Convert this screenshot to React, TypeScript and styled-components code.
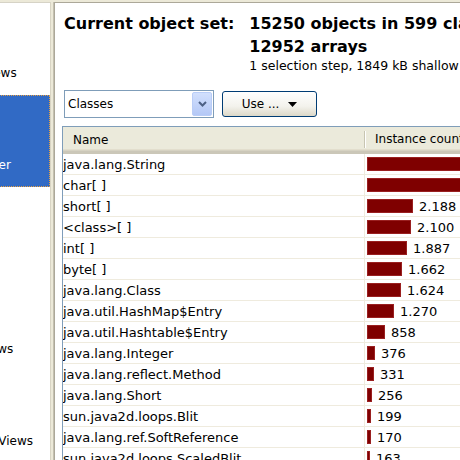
import React from 'react'
import styled, { createGlobalStyle } from 'styled-components'

const GlobalStyle = createGlobalStyle`
  html, body {
    margin: 0;
    padding: 0;
    background: #ece9d8;
  }
  body {
    font-family: "DejaVu Sans", Verdana, sans-serif;
    overflow: hidden;
  }
`

const Frame = styled.div`
  display: flex;
  height: 460px;
  padding-top: 2px;
  box-sizing: border-box;
  overflow: hidden;
`

const Sidebar = styled.div`
  width: 50px;
  flex: none;
  background: #fff;
  border-top: 1px solid #d6d3c6;
  overflow: hidden;
`

const TileColumn = styled.div`
  width: 154px;
  margin-left: -104px;
  display: flex;
  flex-direction: column;
`

const Tile = styled.div<{ $selected?: boolean }>`
  height: 92px;
  flex: none;
  box-sizing: border-box;
  display: flex;
  align-items: flex-end;
  justify-content: center;
  padding-bottom: 15px;
  font-size: 12px;
  white-space: nowrap;
  color: ${p => (p.$selected ? '#fff' : '#000')};
  background: ${p => (p.$selected ? '#316ac5' : 'transparent')};
  outline: ${p => (p.$selected ? '1px dotted #e8a040' : 'none')};
  outline-offset: -1px;
`

const Splitter = styled.div`
  width: 4px;
  flex: none;
  box-sizing: border-box;
  background: #ece9d8;
  border-left: 1px solid #d8d4c4;
  border-right: 1px solid #c4c0b0;
`

const Main = styled.div`
  flex: 1;
  min-width: 0;
  background: #fff;
  border-top: 1px solid #aca899;
  border-left: 1px solid #aca899;
  padding-left: 7px;
  overflow: hidden;
`

const Summary = styled.div`
  display: grid;
  grid-template-columns: auto 1fr;
  column-gap: 15px;
  padding: 9px 0 0 2px;
  white-space: nowrap;
`

const Label = styled.div`
  font-weight: bold;
  font-size: 16px;
  line-height: 23px;
`

const Values = styled.div`
  min-width: 0;
`

const Value = styled.div`
  font-weight: bold;
  font-size: 16px;
  line-height: 23px;
`

const Note = styled.div`
  font-size: 12.5px;
  line-height: 16px;
`

const Controls = styled.div`
  display: flex;
  align-items: center;
  gap: 8px;
  padding: 16px 0 0 2px;
  height: 28px;
  box-sizing: content-box;
`

const Combo = styled.div`
  width: 150px;
  height: 28px;
  box-sizing: border-box;
  border: 1px solid #7f9db9;
  display: flex;
  align-items: center;
  justify-content: space-between;
  padding: 1px 1px 1px 3px;
  font-size: 12px;
`

const ComboArrow = styled.div`
  width: 20px;
  height: 100%;
  box-sizing: border-box;
  border: 1px solid #b9cdf7;
  border-radius: 2px;
  background: linear-gradient(#d2e0fd, #b4c8f6);
  display: flex;
  align-items: center;
  justify-content: center;
`

const MenuButton = styled.button`
  width: 95px;
  height: 26px;
  border: 1px solid #003c74;
  border-radius: 3px;
  background: linear-gradient(#ffffff, #f3f2ec 60%, #dcd8c8);
  font-family: "DejaVu Sans", Verdana, sans-serif;
  font-size: 12px;
  color: #000;
  display: flex;
  align-items: center;
  justify-content: center;
  gap: 9px;
  padding: 0;
`

const Table = styled.div`
  margin-top: 8px;
  width: 520px;
  border-top: 1px solid #7f9db9;
  border-left: 1px solid #7f9db9;
`

const HeaderRow = styled.div`
  display: grid;
  grid-template-columns: 302px 1fr;
  height: 27px;
  box-sizing: border-box;
  background: #ebeadb;
  border-bottom: 3px solid #cbc7b8;
  box-shadow: inset 0 -1px 0 #d6d2c2, inset 0 -2px 0 #e2decd;
  font-size: 12px;
`

const HeaderCell = styled.div<{ $divider?: boolean }>`
  display: flex;
  align-items: center;
  padding-left: 10px;
  border-right: ${p => (p.$divider ? '1px solid #c7c5b2' : 'none')};
  box-shadow: ${p => (p.$divider ? '1px 0 0 #fff' : 'none')};
  margin: ${p => (p.$divider ? '4px 0 3px' : '0')};
`

const Row = styled.div`
  display: grid;
  grid-template-columns: 302px 1fr;
  height: 21px;
  box-sizing: border-box;
  border-bottom: 1px solid #efebde;
  font-size: 13px;
`

const NameCell = styled.div`
  display: flex;
  align-items: center;
  border-right: 1px solid #efebde;
  white-space: nowrap;
  overflow: hidden;
`

const CountCell = styled.div`
  display: flex;
  align-items: center;
  gap: 6px;
  padding-left: 2px;
  white-space: nowrap;
`

const Bar = styled.div`
  height: 14px;
  flex: none;
  box-sizing: border-box;
  background: #7f0000;
  border: 1px solid #9a2020;
`

const rows: [string, number][] = [
  ['java.lang.String', 4795],
  ['char[ ]', 4511],
  ['short[ ]', 2188],
  ['<class>[ ]', 2100],
  ['int[ ]', 1887],
  ['byte[ ]', 1662],
  ['java.lang.Class', 1624],
  ['java.util.HashMap$Entry', 1270],
  ['java.util.Hashtable$Entry', 858],
  ['java.lang.Integer', 376],
  ['java.lang.reflect.Method', 331],
  ['java.lang.Short', 256],
  ['sun.java2d.loops.Blit', 199],
  ['java.lang.ref.SoftReference', 170],
  ['sun.java2d.loops.ScaledBlit', 163],
]

const tiles = ['Memory Views', 'Heap Walker', 'Threads', 'Thread Views', 'VM Telemetry Views']

const fmt = (n: number) => (n >= 1000 ? `${Math.floor(n / 1000)}.${String(n % 1000).padStart(3, '0')}` : String(n))

export default function App() {
  return (
    <>
      <GlobalStyle />
      <Frame>
        <Sidebar>
          <TileColumn>
            {tiles.map((t, i) => (
              <Tile key={t} $selected={i === 1}>{t}</Tile>
            ))}
          </TileColumn>
        </Sidebar>
        <Splitter />
        <Main>
          <Summary>
            <Label>Current object set:</Label>
            <Values>
              <Value>15250 objects in 599 classes, 2298 instances,</Value>
              <Value>12952 arrays</Value>
              <Note>1 selection step, 1849 kB shallow size</Note>
            </Values>
          </Summary>
          <Controls>
            <Combo>
              Classes
              <ComboArrow>
                <svg width="9" height="6" viewBox="0 0 9 6">
                  <path d="M1 1 L4.5 4.5 L8 1" fill="none" stroke="#4d6185" strokeWidth="2" />
                </svg>
              </ComboArrow>
            </Combo>
            <MenuButton>
              Use ...
              <svg width="9" height="5" viewBox="0 0 9 5">
                <path d="M0 0 H9 L4.5 5 Z" fill="#000" />
              </svg>
            </MenuButton>
          </Controls>
          <Table>
            <HeaderRow>
              <HeaderCell $divider>Name</HeaderCell>
              <HeaderCell>Instance count</HeaderCell>
            </HeaderRow>
            {rows.map(([name, count]) => (
              <Row key={name}>
                <NameCell>{name}</NameCell>
                <CountCell>
                  <Bar style={{ width: Math.max(2, Math.round(count * 0.021)) }} />
                  {fmt(count)}
                </CountCell>
              </Row>
            ))}
          </Table>
        </Main>
      </Frame>
    </>
  )
}
